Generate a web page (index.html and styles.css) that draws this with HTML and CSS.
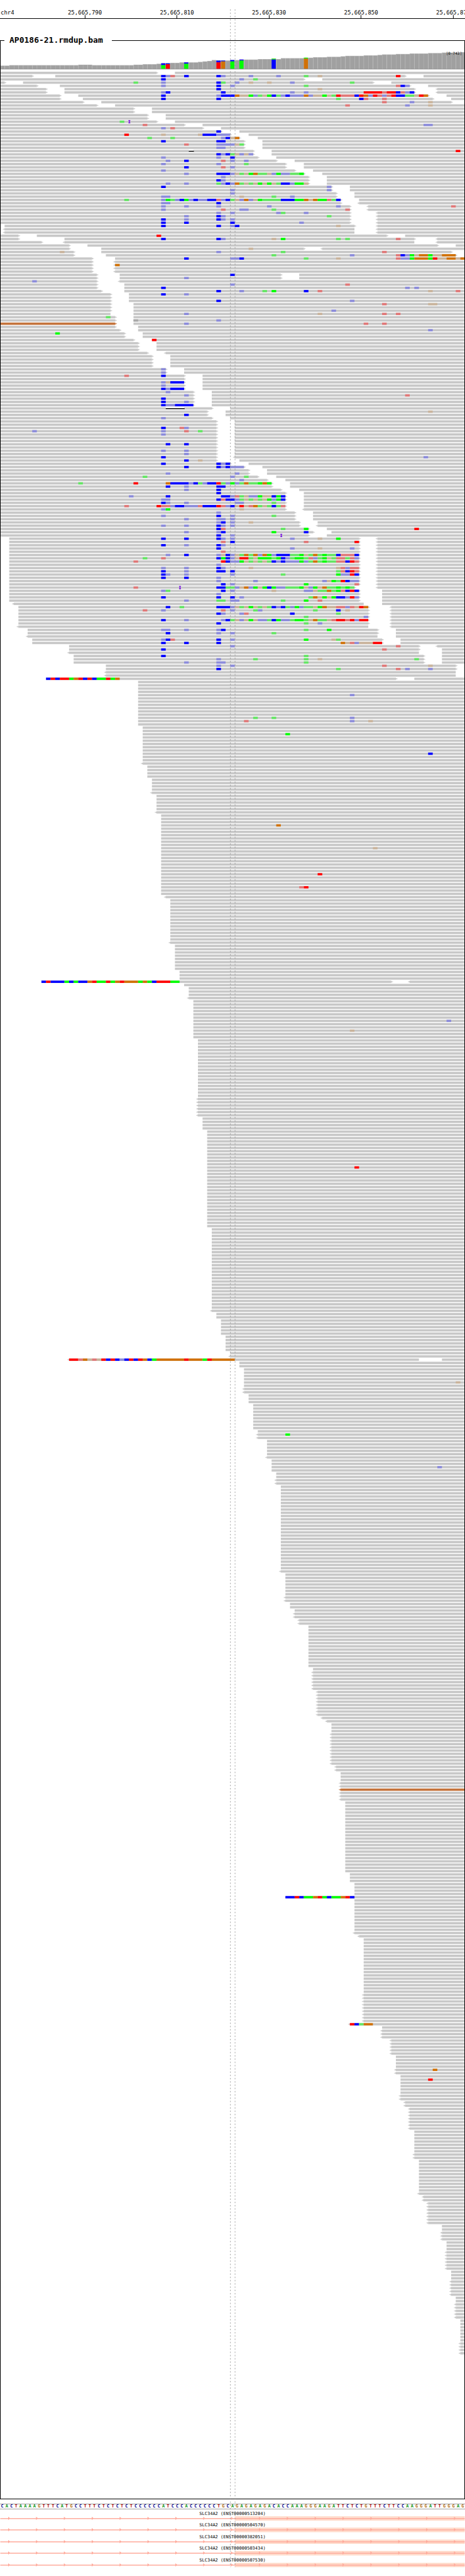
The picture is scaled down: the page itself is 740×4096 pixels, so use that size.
FILE: index.html
```html
<!DOCTYPE html>
<html lang="en">
<head>
<meta charset="utf-8">
<meta name="viewport" content="width=device-width, initial-scale=1">
<title>AP0186-21.rmdup.bam</title>
<link rel="stylesheet" href="styles.css">
</head>
<body>
<main class="browser">
  <header class="ruler" id="ruler">
    <span class="ruler-chromosome">chr4</span>
  </header>

  <fieldset class="panel">
    <legend class="panel-title">AP0186-21.rmdup.bam</legend>
    <div class="coverage">
      <svg class="track" id="coverage" viewBox="0 100 1000 54" role="img" aria-label="Coverage"></svg>
      <span class="coverage-range">[0-743]</span>
    </div>
    <svg class="track" id="reads" viewBox="0 154 1000 5215" role="img" aria-label="Aligned reads"></svg>
  </fieldset>

  <div class="sequence" id="sequence"></div>

  <div class="genes" id="genes"></div>

  <svg class="guides" viewBox="0 0 1000 5516" aria-hidden="true">
    <path class="guide" d="M495.5 20V5516M505.5 20V5516"/>
  </svg>
</main>
<script src="app.js"></script>
</body>
</html>
```

FILE: styles.css
```css
* {
  box-sizing: border-box;
}

body {
  margin: 0;
  background: #fff;
  color: #000;
  font-family: "DejaVu Sans Mono", "Liberation Mono", monospace;
}

.browser {
  position: relative;
  overflow: hidden;
  padding-bottom: 14px;
}

/* ruler */
.ruler {
  position: relative;
  height: 30px;
  border-bottom: 1px solid #000;
  font-size: 9px;
  line-height: 9px;
  display: flex;
  align-items: flex-end;
  padding: 0 0 4px 1px;
}

.tick {
  position: absolute;
  bottom: 0;
  display: flex;
  flex-direction: column;
  align-items: center;
  transform: translateX(-50%);
}

.tick::after {
  content: "";
  width: 1px;
  height: 5px;
  margin-top: -1px;
  background: #000;
}

/* alignment panel */
.panel {
  min-width: 0;
  margin: 24px 0 0;
  padding: 0;
  border: 1px solid #000;
}

.panel-title {
  margin-left: 6px;
  padding: 0 14px 0 8px;
  font-size: 13px;
  line-height: 20px;
  font-weight: bold;
}

.coverage {
  position: relative;
}

.coverage-range {
  position: absolute;
  top: 7px;
  right: 4px;
  font-size: 6px;
  line-height: 8px;
}

.track {
  display: block;
  width: calc(100% + 2px);
  margin: 0 -1px;
}

.depth { fill: #a0a0a0; }
.depth-edge { fill: #b0b0b0; }
.baseline { fill: #787878; }

.read { fill: #c8c8c8; }
.read-odd { fill: #c4733c; }
.base-A { fill: #00ff00; }
.base-C { fill: #0000ff; }
.base-G { fill: #d17105; }
.base-T { fill: #ff0000; }
.base-N { fill: #a8a8a8; }
.low-a { fill: #64e664; }
.low-c { fill: #8c8cdb; }
.low-g { fill: #cab49c; }
.low-t { fill: #e07878; }
.gap { fill: #fff; }
.deletion { fill: #000; }
.insertion { fill: #7d1ee0; }

/* reference sequence */
.sequence {
  display: grid;
  grid-template-columns: repeat(101, minmax(0, 1fr));
  margin-top: 7px;
  border: solid #a0a0a0;
  border-width: 1px 0;
  font-size: 7px;
  line-height: 7px;
  font-weight: bold;
  text-align: center;
}

.letter-A { color: #109618; }
.letter-C { color: #00008f; }
.letter-G { color: #b06c10; }
.letter-T { color: #b00000; }

/* gene models */
.genes {
  display: flex;
  flex-direction: column;
  justify-content: space-between;
  min-height: 89px;
  margin-top: 3px;
}

.gene-name {
  display: block;
  font-size: 7px;
  line-height: 8px;
  text-align: center;
}

.gene-model {
  display: block;
  width: 100%;
}

.exon { fill: #ffdccc; }
.intron { fill: #ffa899; }

/* centre guides */
.guides {
  position: absolute;
  top: 0;
  left: 0;
  width: 100%;
  pointer-events: none;
}

.guide {
  fill: none;
  stroke: #8c8c8c;
  stroke-width: 1;
  stroke-dasharray: 3 4;
}
```

FILE: app.js
```js
const BASE = 9.9;
const LEFT = 1.4;
const RIGHT = 998.6;

/*
 * One entry per row of reads: [repeat, spans and marks].
 *   "0-34>"   span of bases, with > or < for the strand arrow, open end = window edge
 *   "35:CcA"  bases from column 35, capitals are high quality
 *   "28I"     insertion,  "36D4" deletion of four bases,  "!" odd mate colour
 */
const rows = `
0-34> 38-
0-7> 12-88> 92- 35:Cct 40:C 47:Cc 54:c 60:c 66:a 69:g 86:T
0-66> 70- 35:C 52:c 55:a
0-1> 5-81> 85- 29:a 35:c 47:Ca 51:c 54:g 58:g 63:c 76:a
0-8> 13-89> 93- 35:c 47:C 50:c 66:a 86:tCc
0-10> 14-90> <95- 47:C 69:g
0-10> 14-90> <95- 35:cC 48:C 63:c 66:c 79:TTTTtTTCtcC
0-13> 17-93> 97- 35:C 47:cCCCGggAcagACacCcccGcggAgaTtttCTGcTtctTCCaagTG
0-13> 18-94> 98- 35:C 47:C 73:a 78:Ct 83:t
0-18> 22-98> 83:t 89:c 93:g
0-21> 25- 75:t 88:c 93:g
2x 0-29> 33-
2x 0-32> 36-
0-34> 38- 26:a 28I
0-40> 44- 31:t 92:cc
0-44> 48- 35:c 37:t
0-48> 52- 47:C
0-50> 54- 27:T 35:g 43:gCCCccc
0-52> 56- 32:a 37:a 48:cCgG
0-53> 57- 35:C 47:CC
0-53> 57- 40:t 47:ccccga
0-53> 57- 47:cc
0-55> 59- 41D1 99:T
0-55> 59- 47:CcCagcgc
0-56> 60- 35:c 47:c 50:C
0-60> 64- 36:c 40:C 48:t 50:c 53:c
0-62> 66- 35:c 47:c 53:a
0-62> 66- 40:C 48:t 50:c
0-64> 68- 35:c
0-66> 70- 40:c 47:CCCcgagAGaagcAccaaA
0-67> 71- 48:c
0-67> 71- 47:Cc
0-67> 71- 36:c 40:c 47:acCcGagagAgAgaCCcAAg
0-72> 76- 35:C 71:c
0-72> 76- 50:c 71:c
0-73> 77- 50:c
0-73> 77- 35:cc 52:g 59:a 63:c
0-74> 78- 27:a 35:cAacCAcCccCCtcCagcGcgAaaaaCCCAAGgGAAtaC
0-74> <78- 35:cc 47:C
0-76> <80- 35:c 40:c 47:c 58:c 73:c 98:t
0-76> <80- 35:c 48:t 52:cc 59:a 75:t
0-76> <82- 47:c 50:c 60:ca 66:c
0-76> <82- 40:c 47:Cc 71:a
0-76> <82- 35:C 40:c 47:Cc 50:c
0-76> <82- 35:C 40:C 50:C 65:c
1-77> <82- 35:C 47:C 50:cC 73:g
2x <1-77 <82-
0-4> 8-84> 88- 34:T
0-4> 14-90> <95- 35:C 47:Cc 59:g 61:A 73:a 75:a 86:t
0-9> <14-90 <95-
0-15> 19-95> 99-
0-15> 22-66> <70- 54:g
0-16> 22-98> 13:g 47:c 61:a 83:t
0-16> 23-99> 59:a 76:c 86:tCcAgGGAggGGG
0-20> 25- 40:C 50:ccC 66:a 73:g 86:tccAGGGATggGGgG
0-20> <25-
0-20> <25- 25:G
2x 0-20> <25-
0-21> 26-61> 65- 50:C
0-21> 26-61> 65- 40:c
0-21> <26- 7:c
0-21> 27- 50:c 75:t
0-21> 27- 35:C 88:c 90:c
0-22> 27- 47:C 52:c 57:a 59:A 66:C 69:t 93:g 99:t
0-24> 28- 35:C 40:c
0-24> 28-
0-24> 28- 47:C 76:c
0-24> 29- 83:t 93:gg
0-24> 29-
0-24> 29- 72:c
0-24 29- 40:c 69:g 83:t 86:t
0-25> 29- 23:a
0-25> 29- 29:N 47:c
!0-25> 29- 40:c 79:t 83:t
0-25> 30-
0-26> 30- 93:c
0-27> 31- 12:A
0-27> 31-
0-29> 33- 33:T
3x 0-30> 34-
0-32> <36-
4x 0-33> 37-
2x 0-36> 40- 35:c
0-40> 44- 27:t 35:C
0-40> 44-
0-40> 44- 35:cgCCC
0-40> 44- 35:c
0-40> 44- 35:CcCCC
0-42> 46- 36:c
0-42> 46- 40:c 88:t
0-42> 46- 35:C
0-42> 46- 35:C 40:c
0-42> 46- 35:CccCCCC
0-46> 50- 36D4
0-45> 49- 93:g
0-45> 49- 40:C
0-46> 50- 35:c
2x 0-47> 51-
0-47> 51- 35:C 39:tc
0-47> 51- 7:c 35:c 40:t 43:a
0-47> 51- 35:c
2x 0-47> 51-
0-47> 51- 36:C 40:C
0-47> 51-
0-47> 51- 35:c 40:c
0-47> 51- 40:c
0-47> <51- 35:C 92:c
0-47> 52- 40:C 43:g
0-50> 54- 35:C 47:CcC
0-53> 57- 40:C 47:CcCccc
0-54> 58-
0-54> 58- 36:c 51:c
0-56> 60- 31:a 50:c 53:a
0-58> 62- 52:c
0-59> 63- 17:a 29:T 36:GCCCCcCacCCTacAcaGaaAGA
0-59> 63- 36:C 40:c 47:CC
0-61> 65- 40:c 47:C
0-62> 66- 47:C
0-62> 66- 28:c 36:C 48:CCctagccAggCAC
0-62> 66- 35:cc 47:CtCCcagagagAcAC
0-62> 66- 35:Cc 40:c 51:cc 59:a
0-62> 66- 27:t 34:TttcCCccctCCCTtcCgTgtGagaCat
0-62> <66- 35:cA 52:g
0-64> 68- 47:c
0-64> 68- 35:c 47:C 50:c 59:a
0-64> 68- 40:c 47:cc 50:c
0-65> 69- 47:cC 50:c 54:g
0-65> <69- 35:c 40:c 47:Cc 50:c
0-67> 71- 47:Ct 61:a 66:A 90:T
0-68> 72- 40:c 47:cC 59:A 66:C
0-67> 71- 47:C 50:c 61I
2-78> <82- 35:C 40:C 47:Cc 50:c 63:c 69:g 73:A
2-78> <82- 48:t 50:C 66:t 77:T
2-78> <82- 35:C 40:c 47:Cc
2-78> <82- 47:C 63:c 69:g 76:c
2-78> <82- 48:t
2-78> <82- 36:c 40:C 47:cgCcgaGaGcGAcCCCaaAgaGaAaaCtttC
2-78> <82- 31:a 35:t 47:CACcgTTagAAAaACcaAAatcaAgattatc
2-78> <82- 29:t 48:TCccAgagagaCcCcccAcaGaAaattCTt
2-78> <82- 47:c
2-78> <82- 35:c 40:c 47:Cc 54:g 73:gtctt
2-78> <82- 35:C 40:c 47:CC 50:C 73:atCTt
2-78> <82- 35:Cc 40:c 50:c 61:a 73:AccTC
2-78> <82- 35:C 40:C 47:c
2-78> <82- 47:c 55:c 70:cgAaTCcc
2-78> <82- 48:C 50:c 66:A 77:t
2-77> <82- 29:t 39I 47:CCaacgGcAgACAccaaaAgcAgGaaAaAa
2-78> 83- 35:ca 48:C 50:c 59:g 66:ccgaaGaAtCTC
2-78> 83- 47:c
2-78> 83- 35:C 47:C 50:C 52:c 67:aGgAgACCcTc
2-78> 83- 40:c 47:aa 50:cc 61:a 66:A 69:t
<3-79 83-
4-80> <85- 36:C 39:a 47:CCCcgagAgagaCcCacAcaagAGggttctgTG
4-80> <85- 31:t 35:c 48:t 50:c 55:ac 68:a 73:C 75:g
4-80> <85- 47:Cc 52:ct 63:C 73:a
4-80> <85- 66:a 79:c
4-80> <85- 35:C 40:c 48:cCagcgAgccaCAccaAAagGaagtTTtTcTT
4-80> <85- 47:C 66:a 69:c
<4-80 <85-
6-82> 86- 35:cc 40:c 47:cC 66:a 71:A
6-82> 86- 36:C 47:c 50:c 59:a
<6-82 86-
7-83> 87- 35:cCt 47:C 50:c 66:A 72:ga
7-83> 87- 35:C 40:C 47:C 74:GgtcgggTT
15-91> <95- 50:c 86:t
15-91> 96- 35:C 83:t
<15-91 96-
16-92> 96- 35:C 66:a
16-92> 96- 47:c 55:a 66:a 69:g 90:a
16-92> 96- 40:c 47:cc 66:a
23-99> 47:c 50:c 83:t 93:g
23-99> 47:C 73:a 86:t 88:c 93:c
2x <23-99
10-86> 90- 10:CTCTTAGTCTCAATAG
4x 30-
30- 76:c
6x 30-
30- 55:a 59:a 76:c
30- 53:t 76:c 80:g
30-
2x 31-
31- 62:A
5x 31-
31- 93:C
2x 31-
<31-
4x 32-
4x 33-
<33-
5x 34-
<34-
3x 35-
35- 60:G
6x 35-
35- 81:g
7x 35-
35- 69:T
3x 35-
35- 65:tT
2x 35-
<36-
13x 37-
<37-
8x 38-
3x 39-
9-85> <89- 9:CTCCCACACCGTAATAGTGGGAGACTTTAA
40-
3x 41-
<41-
6x 42-
42- 97:c
2x 42-
42- 76:g
2x 42-
18x 43-
6x <43-
4x 44-
11x 45-
45- 77:T
18x 45-
25x 46-
<46-
2x 47-
5x 48-
5x 49-
50-
<50-
<15-91 96- 15:TTtGgtgTCTCcCTCTGCAGGGGGGTGGGATGGGGG
2x 52-
4x 53-
53- 99:g
53-
2x <53-
3x 54-
8x 55-
56-
<56- 62:A
<56-
5x 58-
<58-
2x 59-
59- 95:c
59-
2x 60-
2x <60-
26x 61-
<61-
7x 62-
2x <62-
2x 63-
64-
2x <64-
2x <65-
13x 67-
68-
6x <68-
8x <69-
<70-
<71-
3x 72-
10x <72-
2x <73-
3x 74-
2x <74-
!<74-
3x <74-
22x 75-
3x 76-
4x 77-
62- 62:CCTCAAGTACAAGTC
10x 77-
<77-
<78-
17x 79-
9x <79-
<76- 76:TCaGG
83-
3x <83-
5x <85-
4x 86-
<86- 94:G
<86-
87-
87- 93:T
4x 87-
2x <87-
2x <88-
7x <89-
7x 90-
2x <90-
10x 91-
<91-
2x <92-
7x <93-
2x 96-
3x <96-
3x 97-
6x <97-
3x 98-
5x <98-
2x 99-
5x <99-
7x 100-
4x <100-
`.trim().split("\n");

const rect = (cls, x, y, w, h) =>
  `<rect class="${cls}" x="${+x.toFixed(1)}" y="${y}" width="${+w.toFixed(1)}" height="${h}"/>`;

function drawSpan(odd, leftArrow, from, to, rightArrow, y) {
  const cls = odd ? "read-odd" : "read";
  const x0 = Math.max(from * BASE, LEFT);
  const x1 = to === "" ? RIGHT : Math.min(to * BASE, RIGHT);
  let out = rect(cls, x0, y, x1 - x0, 5);
  if (leftArrow) out += rect(cls, x0 - 2, y + 1, 2, 3) + rect(cls, x0 - 4, y + 2, 2, 1);
  if (rightArrow) out += rect(cls, x1, y + 1, 2, 3) + rect(cls, x1 + 2, y + 2, 2, 1);
  return out;
}

function drawBases(start, letters, y) {
  let out = "";
  for (let i = 0; i < letters.length;) {
    let j = i;
    while (letters[j] === letters[i]) j++;
    const c = letters[i];
    const x = (start + i) * BASE;
    const end = Math.min((start + j) * BASE, RIGHT);
    out += rect((c < "a" ? "base-" : "low-") + c, x, y, end - x, 5);
    i = j;
  }
  return out;
}

function drawToken(token, y) {
  let m;
  if ((m = token.match(/^(!?)(<?)(\d+)-(\d*)(>?)$/))) {
    return drawSpan(m[1], m[2], +m[3], m[4], m[5], y);
  }
  if ((m = token.match(/^(\d+):(\w+)$/))) return drawBases(+m[1], m[2], y);
  if ((m = token.match(/^(\d+)I$/))) {
    const x = m[1] * BASE;
    return rect("insertion", x, y, 2, 5) + rect("insertion", x - 1, y - 1, 4, 2) +
      rect("insertion", x - 1, y + 4, 4, 2);
  }
  m = token.match(/^(\d+)D(\d+)$/);
  const x = m[1] * BASE;
  const w = m[2] * BASE;
  return rect("gap", x, y, w, 5) + rect("deletion", x, y + 2, w + 1, 2);
}

function drawReads() {
  let y = 154;
  let out = "";
  for (const row of rows) {
    const m = row.match(/^(?:(\d+)x )?(.*)$/);
    for (let n = 0; n < (m[1] || 1); n++) {
      out += m[2].split(" ").map((t) => drawToken(t, y)).join("");
      y += 7;
    }
  }
  document.getElementById("reads").innerHTML = out;
}

/* Depth runs: [bases, height]. */
const depth = [
  [2, 7], [15, 8], [3, 9], [9, 8], [2, 9], [3, 10], [1, 11], [2, 12], [2, 13], [4, 14],
  [1, 15], [1, 16], [1, 17], [1, 19], [3, 18], [2, 19], [4, 20], [3, 21], [1, 22], [1, 21],
  [5, 23], [2, 24], [3, 25], [3, 26], [1, 27], [4, 28], [3, 29], [1, 30], [3, 31], [3, 32],
  [4, 33], [3, 34], [4, 35], [1, 36]
];

/* Mixed columns: column, main base, its height, second base on top, trace base. */
const variants = [
  [35, "A", 8, "C", "T"], [36, "T", 10, "C", "A"], [40, "A", 11, "C", "T"],
  [47, "T", 14, "C", "A"], [48, "G", 16, "C", "A"], [50, "A", 16, "C", ""],
  [52, "A", 18, "C", "G"], [59, "C", 20, "A", "G"], [66, "G", 22, "A", "T"]
];

function drawCoverage() {
  const heights = depth.flatMap(([n, h]) => Array(n).fill(h));
  let out = "";
  heights.forEach((h, i) => {
    const x = Math.max(i * BASE, LEFT);
    const end = Math.min((i + 1) * BASE, RIGHT);
    out += rect("depth-edge", x, 148 - h, end - x, h);
    out += rect("depth", x + 1, 149 - h, end - x - 1, h - 1);
  });
  for (const [col, main, h, top, trace] of variants) {
    const x = col * BASE;
    const full = heights[col];
    out += rect("base-" + top, x, 148 - full, 9, full - h);
    out += rect("base-" + main, x, 148 - h, 9, h);
    if (trace) out += rect("base-" + trace, x + 4, 148 - full, 1, 1);
  }
  out += rect("baseline", LEFT, 148, RIGHT - LEFT, 1);
  document.getElementById("coverage").innerHTML = out;
}

function drawRuler() {
  const ticks = [[18.25, "25,665,790"], [38.05, "25,665,810"], [57.85, "25,665,830"],
    [77.65, "25,665,850"], [97.45, "25,665,870"]];
  document.getElementById("ruler").insertAdjacentHTML("beforeend",
    ticks.map(([p, t]) => `<span class="tick" style="left:${p}%">${t}</span>`).join(""));
}

function drawSequence() {
  const seq = "CACTAAAAGTTTCATGCCTTTCTCTCTCTCCCCCCATCCCACCCCCCTGC" +
    "AGAGAGAGACACCAAAGGGAAGATTCTCTGTTTCTTCCAAGGGATTGGGAG";
  document.getElementById("sequence").innerHTML =
    [...seq].map((c) => `<span class="letter-${c}">${c}</span>`).join("");
}

function drawGenes() {
  const ids = ["ENST00000513204", "ENST00000504570", "ENST00000382051",
    "ENST00000503434", "ENST00000507530"];
  let arrows = "";
  for (let x = 17; x < 1000; x += 60) arrows += `M${x} 1l4 3.5l-4 3.5z`;
  document.getElementById("genes").innerHTML = ids.map((id) => `
    <div class="gene">
      <span class="gene-name">SLC34A2 (${id})</span>
      <svg class="gene-model" viewBox="0 0 1000 10" aria-hidden="true">
        <rect class="exon" x="505" y="0" width="495" height="10"/>
        <rect class="intron" x="0" y="4" width="1000" height="2"/>
        <path class="intron" d="${arrows}"/>
      </svg>
    </div>`).join("");
}

drawRuler();
drawCoverage();
drawReads();
drawSequence();
drawGenes();
```
